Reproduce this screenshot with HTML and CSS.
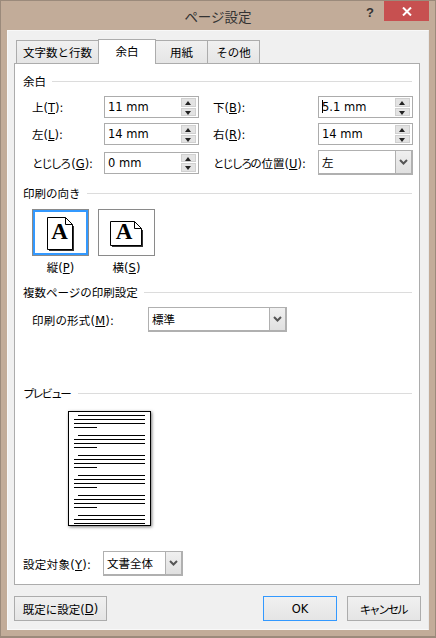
FILE: index.html
```html
<!DOCTYPE html>
<html lang="ja">
<head>
    <meta charset="UTF-8">
    <title>ページ設定</title>
    <link rel="stylesheet" href="styles.css">
</head>
<body>
<div class="window">
    <div class="titlebar">
        <span class="title">ページ設定</span>
        <span class="help">?</span>
        <span class="close">
            <svg width="10" height="9" viewBox="0 0 10 9"><path d="M1 0.5 L9 8.5 M9 0.5 L1 8.5" stroke="#fff" stroke-width="2" fill="none"/></svg>
        </span>
    </div>
    <div class="client">
        <div class="tabs">
            <div class="tab first">文字数と行数</div>
            <div class="tab active">余白</div>
            <div class="tab">用紙</div>
            <div class="tab">その他</div>
        </div>
        <div class="panel">
            <div class="heading margins-heading"><span>余白</span><i></i></div>
            <div class="margin-grid">
                <label>上(<u>T</u>):</label>
                <div class="spin"><span class="val">11 mm</span><div class="spin-btns"><b class="up"></b><b class="down"></b></div></div>
                <label class="col-right">下(<u>B</u>):</label>
                <div class="spin"><span class="val focused">5.1 mm</span><div class="spin-btns"><b class="up"></b><b class="down"></b></div></div>
                <label>左(<u>L</u>):</label>
                <div class="spin"><span class="val">14 mm</span><div class="spin-btns"><b class="up"></b><b class="down"></b></div></div>
                <label class="col-right">右(<u>R</u>):</label>
                <div class="spin"><span class="val">14 mm</span><div class="spin-btns"><b class="up"></b><b class="down"></b></div></div>
                <label><span class="tight">とじしろ</span>(<u>G</u>):</label>
                <div class="spin"><span class="val">0 mm</span><div class="spin-btns"><b class="up"></b><b class="down"></b></div></div>
                <label class="col-right"><span class="tight">とじしろの</span>位置(<u>U</u>):</label>
                <div class="combo"><span class="val">左</span><span class="arrow"><svg width="9" height="6" viewBox="0 0 9 6"><path d="M1 1 L4.5 4.5 L8 1" stroke="#555" stroke-width="2" fill="none"/></svg></span></div>
            </div>

            <div class="heading orient-heading"><span>印刷の向き</span><i></i></div>
            <div class="orient">
                <div class="orient-item">
                    <div class="orient-btn selected">
                        <svg width="28" height="35" viewBox="0 0 28 35">
                            <path d="M2 2 H18 L26 9 H27 V34 H2 Z" fill="#333"/>
                            <path d="M0.5 0.5 H18.5 L25.5 7.5 V32.5 H0.5 Z" fill="#fff" stroke="#000"/>
                            <path d="M18.5 0.5 V7.5 H25.5" fill="none" stroke="#000"/>
                            <text x="12.5" y="22" class="glyph">A</text>
                        </svg>
                    </div>
                    <span>縦(<u>P</u>)</span>
                </div>
                <div class="orient-item">
                    <div class="orient-btn">
                        <svg width="34" height="31" viewBox="0 -4 34 31">
                            <path d="M2 2 H24 L32 9 H33 V26 H2 Z" fill="#333"/>
                            <path d="M0.5 0.5 H24.5 L31.5 7.5 V24.5 H0.5 Z" fill="#fff" stroke="#000"/>
                            <path d="M24.5 0.5 V7.5 H31.5" fill="none" stroke="#000"/>
                            <text x="14" y="18" class="glyph">A</text>
                        </svg>
                    </div>
                    <span>横(<u>S</u>)</span>
                </div>
            </div>

            <div class="heading multi-heading"><span>複数ページの印刷設定</span><i></i></div>
            <div class="multi-row">
                <label>印刷の形式(<u>M</u>):</label>
                <div class="combo wide"><span class="val">標準</span><span class="arrow"><svg width="9" height="6" viewBox="0 0 9 6"><path d="M1 1 L4.5 4.5 L8 1" stroke="#555" stroke-width="2" fill="none"/></svg></span></div>
            </div>

            <div class="heading preview-heading"><span class="tight">プレビュー</span><i></i></div>
            <div class="page">
                <svg id="lines" width="81" height="113" viewBox="0 0 81 113"></svg>
            </div>

            <div class="apply-row">
                <label>設定対象(<u>Y</u>):</label>
                <div class="combo apply"><span class="val">文書全体</span><span class="arrow"><svg width="9" height="6" viewBox="0 0 9 6"><path d="M1 1 L4.5 4.5 L8 1" stroke="#555" stroke-width="2" fill="none"/></svg></span></div>
            </div>
        </div>
        <div class="footer">
            <div class="btn default-set">既定に設定(<u>D</u>)</div>
            <div class="btn ok">OK</div>
            <div class="btn cancel"><span class="tight">キャンセル</span></div>
        </div>
    </div>
</div>
<script>
    // text lines of the preview page, one block every 20px
    var svg = document.getElementById('lines');
    var out = '';
    function line(x1, x2, y) {
        out += '<rect x="' + x1 + '" y="' + y + '" width="' + (x2 - x1) + '" height="1" fill="#000"/>';
    }
    for (var i = 0; i < 6; i++) {
        var y = 3 + i * 20;
        line(9, 76, y);
        line(5, 76, y + 4);
        line(5, 76, y + 8);
        if (i < 5) line(5, 28, y + 12);
    }
    svg.innerHTML = out;
</script>
</body>
</html>
```

FILE: styles.css
```css
* {
    margin: 0;
    padding: 0;
    box-sizing: border-box;
}

body {
    background: #c2ac99;
    font-family: "DejaVu Sans", "Noto Sans CJK JP", sans-serif;
    font-size: 11.5px;
    color: #000;
}

.window {
    width: 436px;
    height: 638px;
    border: 1px solid #9b8a7b;
    border-bottom-width: 2px;
    display: flex;
    flex-direction: column;
    position: relative;
}

.titlebar {
    height: 29px;
    display: flex;
    justify-content: center;
    align-items: center;
}

.title {
    font-size: 13.5px;
    color: #333;
}

.help {
    position: absolute;
    top: 4px;
    left: 365px;
    font-family: "Liberation Sans", sans-serif;
    font-weight: bold;
    font-size: 13px;
    color: #333;
}

.close {
    position: absolute;
    top: 0;
    left: 383px;
    width: 45px;
    height: 20px;
    background: #c75050;
    display: flex;
    justify-content: center;
    align-items: center;
}

.client {
    margin: 0 6px 0 6px;
    height: 600px;
    background: #f0f0f0;
    border: 1px solid #f8f8f8;
    border-right-color: #e8e8e8;
    padding: 8px 0 0 6px;
    display: flex;
    flex-direction: column;
}

.tabs {
    display: flex;
    align-items: flex-end;
    height: 25px;
    margin-left: 2px;
    position: relative;
    z-index: 1;
}

.tab {
    height: 23px;
    margin-bottom: 1px;
    width: 52px;
    border: 1px solid #acacac;
    border-bottom: none;
    border-left: none;
    background: linear-gradient(#f0f0f0, #e5e5e5);
    display: flex;
    justify-content: center;
    align-items: center;
}

.tab.first {
    width: 83px;
    border-left: 1px solid #acacac;
    margin-right: -1px;
}

.tab.active {
    width: 58px;
    height: 25px;
    margin-bottom: 0;
    background: #fff;
    border-left: 1px solid #acacac;
    padding-bottom: 2px;
}

.panel {
    width: 406px;
    height: 522px;
    margin-top: -1px;
    background: #fff;
    border: 1px solid #acacac;
    padding: 0 7px 0 8px;
    display: flex;
    flex-direction: column;
}

.tight {
    letter-spacing: -2.2px;
    margin-right: 2px;
}

.heading {
    display: flex;
    align-items: center;
    gap: 6px;
    height: 18px;
}

.heading i {
    flex: 1;
    height: 1px;
    background: #dcdcdc;
}

.margins-heading {
    margin-top: 8px;
}

.margin-grid {
    display: grid;
    grid-template-columns: 72px 95px 119px 95px;
    row-gap: 5px;
    margin-left: 9px;
    margin-top: 6px;
    align-items: center;
}

.col-right {
    padding-left: 14px;
    white-space: nowrap;
}

.spin {
    height: 22px;
    border: 1px solid #acacac;
    background: #fff;
    display: flex;
    align-items: center;
    justify-content: space-between;
    padding-left: 3px;
}

.val {
    position: relative;
}

.val.focused::before {
    content: '';
    position: absolute;
    left: 0;
    top: 0;
    bottom: 1px;
    width: 1px;
    background: #000;
}

.spin-btns {
    width: 15px;
    height: 18px;
    margin-right: 2px;
    display: flex;
    flex-direction: column;
    gap: 1px;
}

.spin-btns b {
    flex: 1;
    background: #e3e3e3;
    border: 1px solid #d0d0d0;
    position: relative;
}

.spin-btns b::after {
    content: '';
    position: absolute;
    left: 3px;
    top: 2px;
    border-left: 3.5px solid transparent;
    border-right: 3.5px solid transparent;
}

.spin-btns .up::after {
    border-bottom: 4px solid #222;
}

.spin-btns .down::after {
    border-top: 4px solid #222;
}

.combo {
    height: 25px;
    border: 2px solid #b0b0b0;
    border-width: 1px 2px 2px 1px;
    background: #fff;
    display: flex;
    align-items: center;
    justify-content: space-between;
    padding-left: 3px;
}

.arrow {
    width: 16px;
    height: 100%;
    background: linear-gradient(#f0f0f0, #e0e0e0);
    border-left: 1px solid #b0b0b0;
    display: flex;
    justify-content: center;
    align-items: center;
}

.orient-heading {
    margin-top: 9px;
}

.orient {
    display: flex;
    gap: 9px;
    margin-left: 9px;
    margin-top: 7px;
}

.orient-item {
    width: 57px;
    display: flex;
    flex-direction: column;
    align-items: center;
    gap: 3px;
}

.orient-btn {
    width: 57px;
    height: 47px;
    padding-top: 7px;
    border: 1px solid #8a8a8a;
    background: #fff;
    display: flex;
    justify-content: center;
    align-items: flex-start;
}

.orient-btn.selected {
    outline: 2px solid #3399ff;
    outline-offset: -3px;
}

.glyph {
    font-family: "Liberation Serif", serif;
    font-weight: bold;
    font-size: 23px;
    text-anchor: middle;
    fill: #000;
}

.multi-heading {
    margin-top: 8px;
}

.multi-row {
    display: flex;
    align-items: center;
    margin-left: 9px;
    margin-top: 6px;
}

.multi-row label {
    width: 116px;
    letter-spacing: 0.2px;
}

.combo.wide {
    width: 139px;
}

.preview-heading {
    margin-top: 52px;
}

.page {
    width: 83px;
    height: 115px;
    margin-left: 45px;
    margin-top: 9px;
    border: 1px solid #000;
    background: #fff;
    box-shadow: 1px 1px 3px #777;
}

.page svg {
    display: block;
}

.apply-row {
    display: flex;
    align-items: center;
    margin-top: 25px;
}

.apply-row label {
    width: 80px;
    letter-spacing: 0.3px;
}

.combo.apply {
    width: 80px;
}

.footer {
    display: flex;
    margin-top: 11px;
    width: 407px;
}

.btn {
    height: 25px;
    border: 1px solid #acacac;
    background: linear-gradient(#f0f0f0, #e5e5e5);
    display: flex;
    justify-content: center;
    align-items: center;
}

.default-set {
    width: 93px;
    margin-right: 156px;
}

.ok {
    width: 74px;
    margin-right: 10px;
    border: 1px solid #3399ff;
}

.cancel {
    width: 74px;
}
```
